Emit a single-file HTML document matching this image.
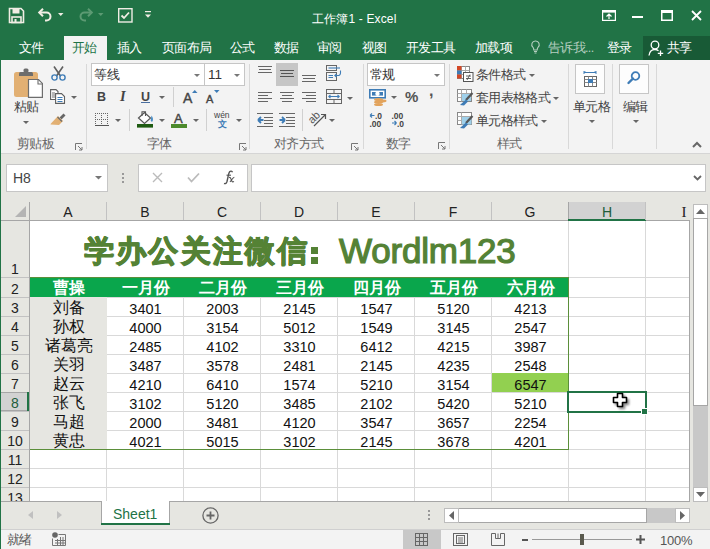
<!DOCTYPE html><html><head><meta charset="utf-8"><style>
*{margin:0;padding:0;box-sizing:border-box}
html,body{width:710px;height:549px;overflow:hidden;background:#f3f3f3;font-family:"Liberation Sans",sans-serif;position:relative}
.ab{position:absolute}
.t{position:absolute;white-space:nowrap;line-height:1}
svg{position:absolute;overflow:visible}
</style></head><body>

<div class="ab" style="left:0px;top:0px;width:710px;height:60px;background:#217346;"></div>
<div class="t" style="left:312px;top:12.5px;font-size:12px;color:#fff;letter-spacing:0.15px">工作簿1 - Excel</div>
<svg style="left:9px;top:8px" width="15" height="15" viewBox="0 0 15 15"><path d="M0.5 0.5H12L14.5 3V14.5H0.5Z" fill="none" stroke="#f0ede4" stroke-width="1.6"/><rect x="3.5" y="1" width="7" height="4.5" fill="#f0ede4"/><rect x="3" y="9" width="9" height="5.5" fill="none" stroke="#f0ede4" stroke-width="1.6"/><rect x="5.5" y="11" width="2" height="3" fill="#f0ede4"/></svg>
<svg style="left:38px;top:8px" width="15" height="13" viewBox="0 0 15 13"><path d="M1.5 4.5H8.5A4 4 0 0 1 8.5 12.5H7" fill="none" stroke="#f0ede4" stroke-width="2"/><path d="M5 0.8L1.2 4.5L5 8.2" fill="none" stroke="#f0ede4" stroke-width="2"/></svg>
<svg style="left:58px;top:13px" width="6" height="4" viewBox="0 0 6 4"><path d="M0 0H5.5L2.75 3Z" fill="#f0ede4"/></svg>
<svg style="left:78px;top:8px" width="15" height="13" viewBox="0 0 15 13"><path d="M13.5 4.5H6.5A4 4 0 0 0 6.5 12.5H8" fill="none" stroke="#5c9a73" stroke-width="2"/><path d="M10 0.8L13.8 4.5L10 8.2" fill="none" stroke="#5c9a73" stroke-width="2"/></svg>
<svg style="left:98px;top:13px" width="6" height="4" viewBox="0 0 6 4"><path d="M0 0H5.5L2.75 3Z" fill="#5c9a73"/></svg>
<svg style="left:118px;top:8px" width="15" height="15" viewBox="0 0 15 15"><rect x="0.7" y="0.7" width="13.3" height="13.3" fill="none" stroke="#f0ede4" stroke-width="1.4"/><path d="M3.5 7.5L6 10L11 4.5" fill="none" stroke="#f0ede4" stroke-width="1.8"/></svg>
<svg style="left:145px;top:11px" width="7" height="8" viewBox="0 0 7 8"><rect x="0" y="0" width="6" height="1.2" fill="#f0ede4"/><path d="M0 3.5H6L3 6.8Z" fill="#f0ede4"/></svg>
<svg style="left:602px;top:10px" width="14" height="11" viewBox="0 0 14 11"><rect x="0.6" y="0.6" width="12.8" height="9.8" fill="none" stroke="#fff" stroke-width="1.2"/><rect x="0.6" y="0.6" width="12.8" height="2" fill="#fff"/><path d="M7 4V9M4.5 6.5L7 4L9.5 6.5" fill="none" stroke="#fff" stroke-width="1.2"/></svg>
<div class="ab" style="left:632px;top:16px;width:11px;height:2px;background:#fff;"></div>
<svg style="left:661px;top:10px" width="12" height="11" viewBox="0 0 12 11"><rect x="0.75" y="0.75" width="10.5" height="9.5" fill="none" stroke="#fff" stroke-width="1.5"/><rect x="0" y="0" width="12" height="3" fill="#fff"/></svg>
<svg style="left:691px;top:10px" width="11" height="11" viewBox="0 0 11 11"><path d="M1 1L10 10M10 1L1 10" stroke="#fff" stroke-width="1.8"/></svg>
<div class="ab" style="left:64px;top:36px;width:43px;height:24px;background:#f3f3f3;"></div>
<div class="t" style="left:19px;top:41.5px;font-size:12.5px;color:#fff;letter-spacing:-0.65px;">文件</div>
<div class="t" style="left:72px;top:41.5px;font-size:12.5px;color:#217346;letter-spacing:-0.65px;">开始</div>
<div class="t" style="left:117px;top:41.5px;font-size:12.5px;color:#fff;letter-spacing:-0.65px;">插入</div>
<div class="t" style="left:162px;top:41.5px;font-size:12.5px;color:#fff;letter-spacing:-0.65px;">页面布局</div>
<div class="t" style="left:230px;top:41.5px;font-size:12.5px;color:#fff;letter-spacing:-0.65px;">公式</div>
<div class="t" style="left:274px;top:41.5px;font-size:12.5px;color:#fff;letter-spacing:-0.65px;">数据</div>
<div class="t" style="left:317px;top:41.5px;font-size:12.5px;color:#fff;letter-spacing:-0.65px;">审阅</div>
<div class="t" style="left:362px;top:41.5px;font-size:12.5px;color:#fff;letter-spacing:-0.65px;">视图</div>
<div class="t" style="left:406px;top:41.5px;font-size:12.5px;color:#fff;letter-spacing:-0.65px;">开发工具</div>
<div class="t" style="left:475px;top:41.5px;font-size:12.5px;color:#fff;letter-spacing:-0.65px;">加载项</div>
<svg style="left:531px;top:40px" width="9" height="15" viewBox="0 0 9 15"><path d="M4.5 1A3.6 3.6 0 0 0 2 7.3C2.6 8 2.8 8.8 2.8 10H6.2C6.2 8.8 6.4 8 7 7.3A3.6 3.6 0 0 0 4.5 1Z" fill="none" stroke="#b5cfc0" stroke-width="1.1"/><path d="M3 11.5H6M3.5 13H5.5" stroke="#b5cfc0" stroke-width="1.1"/></svg>
<div class="t" style="left:548px;top:41.5px;font-size:12.5px;color:#b5cfc0;letter-spacing:-0.65px;">告诉我...</div>
<div class="t" style="left:607px;top:41.5px;font-size:12.5px;color:#fff;letter-spacing:-0.65px;">登录</div>
<div class="ab" style="left:643px;top:36px;width:67px;height:24px;background:#185a36;"></div>
<svg style="left:648px;top:40px" width="17" height="17" viewBox="0 0 17 17"><circle cx="7" cy="5" r="3.8" fill="none" stroke="#fff" stroke-width="1.3"/><path d="M1 15.5C1.5 11.5 4 9.5 7 9.5C8.5 9.5 9.5 10 10.5 10.7" fill="none" stroke="#fff" stroke-width="1.3"/><path d="M12.5 10.5V16M9.8 13.3H15.2" stroke="#fff" stroke-width="1.3"/></svg>
<div class="t" style="left:667px;top:41.5px;font-size:12.5px;color:#fff;letter-spacing:-0.65px;">共享</div>
<div class="ab" style="left:0px;top:60px;width:710px;height:93px;background:#f3f3f3;"></div>
<div class="ab" style="left:0px;top:153px;width:710px;height:1px;background:#d5d5d5;"></div>
<div class="ab" style="left:0px;top:60px;width:1px;height:489px;background:#217346;"></div>
<div class="t" style="left:17px;top:137.5px;font-size:12.5px;color:#666;letter-spacing:-0.65px;">剪贴板</div>
<div class="t" style="left:147px;top:137.5px;font-size:12.5px;color:#666;letter-spacing:-0.65px;">字体</div>
<div class="t" style="left:274px;top:137.5px;font-size:12.5px;color:#666;letter-spacing:-0.65px;">对齐方式</div>
<div class="t" style="left:386px;top:137.5px;font-size:12.5px;color:#666;letter-spacing:-0.65px;">数字</div>
<div class="t" style="left:497px;top:137.5px;font-size:12.5px;color:#666;letter-spacing:-0.65px;">样式</div>
<div class="ab" style="left:86px;top:64px;width:1px;height:85px;background:#d8d8d8;"></div>
<div class="ab" style="left:249px;top:64px;width:1px;height:85px;background:#d8d8d8;"></div>
<div class="ab" style="left:363px;top:64px;width:1px;height:85px;background:#d8d8d8;"></div>
<div class="ab" style="left:449px;top:64px;width:1px;height:85px;background:#d8d8d8;"></div>
<div class="ab" style="left:568px;top:64px;width:1px;height:85px;background:#d8d8d8;"></div>
<div class="ab" style="left:612px;top:64px;width:1px;height:85px;background:#d8d8d8;"></div>
<div class="ab" style="left:656px;top:64px;width:1px;height:85px;background:#d8d8d8;"></div>
<svg style="left:75px;top:143px" width="8" height="8" viewBox="0 0 8 8"><path d="M0.5 7V0.5H7" fill="none" stroke="#777" stroke-width="1"/><path d="M3 3L7 7M7 4V7H4" fill="none" stroke="#777" stroke-width="1"/></svg>
<svg style="left:239px;top:143px" width="8" height="8" viewBox="0 0 8 8"><path d="M0.5 7V0.5H7" fill="none" stroke="#777" stroke-width="1"/><path d="M3 3L7 7M7 4V7H4" fill="none" stroke="#777" stroke-width="1"/></svg>
<svg style="left:351px;top:143px" width="8" height="8" viewBox="0 0 8 8"><path d="M0.5 7V0.5H7" fill="none" stroke="#777" stroke-width="1"/><path d="M3 3L7 7M7 4V7H4" fill="none" stroke="#777" stroke-width="1"/></svg>
<svg style="left:438px;top:142px" width="8" height="8" viewBox="0 0 8 8"><path d="M0.5 7V0.5H7" fill="none" stroke="#777" stroke-width="1"/><path d="M3 3L7 7M7 4V7H4" fill="none" stroke="#777" stroke-width="1"/></svg>
<svg style="left:14px;top:68px" width="29" height="30" viewBox="0 0 29 30"><rect x="0" y="4" width="24" height="25" rx="2.5" fill="#e2b073"/><path d="M5 8V5.5Q5 4 6.5 4H17.5Q19 4 19 5.5V8Z" fill="#6d6d6d"/><rect x="9.5" y="0.5" width="5" height="4" rx="1.5" fill="#6d6d6d"/><path d="M14.5 11.5H24.5L28.4 15.4V29.4H14.5Z" fill="#fff" stroke="#6d6d6d" stroke-width="1.2"/><path d="M24 11.5V16H28.4" fill="none" stroke="#6d6d6d" stroke-width="1.1"/></svg>
<div class="t" style="left:14px;top:100.5px;font-size:12.5px;color:#444;letter-spacing:-0.65px;">粘贴</div>
<svg style="left:23px;top:121px" width="6" height="4" viewBox="0 0 6 4"><path d="M0 0H6L3 3Z" fill="#666"/></svg>
<svg style="left:51px;top:66px" width="15" height="15" viewBox="0 0 15 15"><path d="M3 0.5L9.5 10M12 0.5L5.5 10" stroke="#5f5f5f" stroke-width="1.6"/><circle cx="3.5" cy="11.5" r="2.6" fill="none" stroke="#3e7cb6" stroke-width="1.4"/><circle cx="11.5" cy="11.5" r="2.6" fill="none" stroke="#3e7cb6" stroke-width="1.4"/></svg>
<svg style="left:50px;top:89px" width="16" height="15" viewBox="0 0 16 15"><path d="M0.6 0.6H6L8 2.6V10.5H0.6Z" fill="#fff" stroke="#5f5f5f" stroke-width="1.1"/><path d="M5.6 4.6H11.5L14.5 7.6V14.4H5.6Z" fill="#fff" stroke="#5f5f5f" stroke-width="1.1"/><path d="M7.5 8.5H12.5M7.5 10.5H12.5M7.5 12.5H12.5" stroke="#3e7cb6" stroke-width="1"/><path d="M2 4H5M2 6H5M2 8H5" stroke="#5f5f5f" stroke-width="0.9"/></svg>
<svg style="left:71px;top:96px" width="6" height="4" viewBox="0 0 6 4"><path d="M0 0H6L3 3Z" fill="#666"/></svg>
<svg style="left:50px;top:112px" width="17" height="15" viewBox="0 0 17 15"><path d="M9.5 5.5L13.5 1.5L15.5 3.5L11.5 7.5Z" fill="#666"/><path d="M8 4L13 9L9 13L0.5 12.5L1 11.5Z" fill="#e2b073"/><path d="M7.5 5L12 9.5" stroke="#6d6d6d" stroke-width="1.3"/></svg>
<div class="ab" style="left:91px;top:63px;width:114px;height:23px;background:#fff;border:1px solid #c6c6c6"></div>
<div class="ab" style="left:204px;top:63px;width:41px;height:23px;background:#fff;border:1px solid #c6c6c6"></div>
<div class="t" style="left:94px;top:68px;font-size:13px;color:#333;">等线</div>
<div class="t" style="left:208px;top:68px;font-size:13.5px;color:#333;">11</div>
<svg style="left:194px;top:74px" width="6" height="4" viewBox="0 0 6 4"><path d="M0 0H6L3 3Z" fill="#777"/></svg>
<svg style="left:234px;top:74px" width="6" height="4" viewBox="0 0 6 4"><path d="M0 0H6L3 3Z" fill="#777"/></svg>
<div class="t" style="left:97px;top:91px;font-size:12.5px;color:#444;font-weight:bold">B</div>
<div class="t" style="left:120px;top:89px;font-size:14.5px;color:#444;font-style:italic;font-family:Liberation Serif,serif;font-weight:bold">I</div>
<div class="t" style="left:141px;top:91px;font-size:12.5px;color:#444;font-weight:bold">U</div>
<div class="ab" style="left:141px;top:102px;width:9px;height:1px;background:#4a6fa0;"></div>
<svg style="left:159px;top:96px" width="6" height="4" viewBox="0 0 6 4"><path d="M0 0H6L3 3Z" fill="#666"/></svg>
<div class="ab" style="left:173px;top:87px;width:1px;height:20px;background:#d0d0d0;"></div>
<div class="t" style="left:183px;top:91px;font-size:14px;color:#444;-webkit-text-stroke:0.4px #444">A</div>
<svg style="left:192px;top:90px" width="6" height="3" viewBox="0 0 6 3"><path d="M0 3H5.5L2.75 0Z" fill="#3e7cb6"/></svg>
<div class="t" style="left:206px;top:94px;font-size:11px;color:#444;-webkit-text-stroke:0.4px #444">A</div>
<svg style="left:214px;top:90px" width="6" height="3" viewBox="0 0 6 3"><path d="M0 0H5.5L2.75 3Z" fill="#3e7cb6"/></svg>
<svg style="left:95px;top:113px" width="14" height="14" viewBox="0 0 14 14"><rect x="0" y="0" width="1" height="1" fill="#666"/><rect x="2" y="0" width="1" height="1" fill="#666"/><rect x="4" y="0" width="1" height="1" fill="#666"/><rect x="6" y="0" width="1" height="1" fill="#666"/><rect x="8" y="0" width="1" height="1" fill="#666"/><rect x="10" y="0" width="1" height="1" fill="#666"/><rect x="12" y="0" width="1" height="1" fill="#666"/><rect x="0" y="2" width="1" height="1" fill="#666"/><rect x="6" y="2" width="1" height="1" fill="#666"/><rect x="12" y="2" width="1" height="1" fill="#666"/><rect x="0" y="4" width="1" height="1" fill="#666"/><rect x="6" y="4" width="1" height="1" fill="#666"/><rect x="12" y="4" width="1" height="1" fill="#666"/><rect x="0" y="6" width="1" height="1" fill="#666"/><rect x="2" y="6" width="1" height="1" fill="#666"/><rect x="4" y="6" width="1" height="1" fill="#666"/><rect x="6" y="6" width="1" height="1" fill="#666"/><rect x="8" y="6" width="1" height="1" fill="#666"/><rect x="10" y="6" width="1" height="1" fill="#666"/><rect x="12" y="6" width="1" height="1" fill="#666"/><rect x="0" y="8" width="1" height="1" fill="#666"/><rect x="6" y="8" width="1" height="1" fill="#666"/><rect x="12" y="8" width="1" height="1" fill="#666"/><rect x="0" y="10" width="1" height="1" fill="#666"/><rect x="6" y="10" width="1" height="1" fill="#666"/><rect x="12" y="10" width="1" height="1" fill="#666"/><rect x="0" y="12" width="1" height="1" fill="#666"/><rect x="6" y="12" width="1" height="1" fill="#666"/><rect x="12" y="12" width="1" height="1" fill="#666"/><rect x="0" y="12" width="14" height="1" fill="#555"/></svg>
<svg style="left:115px;top:119px" width="6" height="4" viewBox="0 0 6 4"><path d="M0 0H6L3 3Z" fill="#666"/></svg>
<div class="ab" style="left:129px;top:109px;width:1px;height:22px;background:#d0d0d0;"></div>
<svg style="left:137px;top:111px" width="17" height="17" viewBox="0 0 17 17"><path d="M1.5 7L7.5 1.5L13.5 7L7.5 12.5Z" fill="#fff" stroke="#555" stroke-width="1.2"/><path d="M5 5V0.8H8.5V5" fill="none" stroke="#555" stroke-width="1.1"/><path d="M14.5 4.5C16 6.5 16.5 8.5 15.5 10.5C14.5 11 13.5 10.2 13.8 8.5Z" fill="#4a8ec6"/><rect x="0" y="13" width="16" height="3.6" fill="#1e5b12"/></svg>
<svg style="left:159px;top:119px" width="6" height="4" viewBox="0 0 6 4"><path d="M0 0H6L3 3Z" fill="#666"/></svg>
<div class="t" style="left:174px;top:112px;font-size:13px;color:#444;-webkit-text-stroke:0.4px #444">A</div>
<div class="ab" style="left:171px;top:124px;width:16px;height:3.5px;background:#4c8a2c;"></div>
<svg style="left:193px;top:119px" width="6" height="4" viewBox="0 0 6 4"><path d="M0 0H6L3 3Z" fill="#666"/></svg>
<div class="ab" style="left:206px;top:109px;width:1px;height:22px;background:#d0d0d0;"></div>
<div class="t" style="left:214px;top:111px;font-size:8.5px;color:#444;">wén</div>
<div class="t" style="left:218px;top:120px;font-size:9px;color:#3e7cb6;font-weight:bold">文</div>
<svg style="left:236px;top:119px" width="6" height="4" viewBox="0 0 6 4"><path d="M0 0H6L3 3Z" fill="#666"/></svg>
<svg style="left:258px;top:66px" width="20" height="20" viewBox="0 0 20 20"><rect x="0" y="0" width="14" height="1" fill="#666"/><rect x="1" y="3" width="12" height="1" fill="#666"/><rect x="0" y="6" width="14" height="1" fill="#666"/></svg>
<div class="ab" style="left:276px;top:63px;width:22px;height:23px;background:#c6c6c6;"></div>
<svg style="left:280px;top:70px" width="20" height="20" viewBox="0 0 20 20"><rect x="0" y="0" width="14" height="1" fill="#555"/><rect x="1" y="3" width="12" height="1" fill="#555"/><rect x="0" y="6" width="14" height="1" fill="#555"/></svg>
<svg style="left:302px;top:75px" width="20" height="20" viewBox="0 0 20 20"><rect x="0" y="0" width="14" height="1" fill="#666"/><rect x="1" y="3" width="12" height="1" fill="#666"/><rect x="0" y="6" width="14" height="1" fill="#666"/></svg>
<svg style="left:258px;top:92px" width="20" height="20" viewBox="0 0 20 20"><rect x="0" y="0" width="14" height="1" fill="#666"/><rect x="0" y="3" width="10" height="1" fill="#666"/><rect x="0" y="6" width="14" height="1" fill="#666"/><rect x="0" y="9" width="10" height="1" fill="#666"/></svg>
<svg style="left:280px;top:92px" width="20" height="20" viewBox="0 0 20 20"><rect x="0" y="0" width="14" height="1" fill="#666"/><rect x="2" y="3" width="10" height="1" fill="#666"/><rect x="0" y="6" width="14" height="1" fill="#666"/><rect x="2" y="9" width="10" height="1" fill="#666"/></svg>
<svg style="left:302px;top:92px" width="20" height="20" viewBox="0 0 20 20"><rect x="0" y="0" width="14" height="1" fill="#666"/><rect x="4" y="3" width="10" height="1" fill="#666"/><rect x="0" y="6" width="14" height="1" fill="#666"/><rect x="4" y="9" width="10" height="1" fill="#666"/></svg>
<svg style="left:326px;top:65px" width="17" height="17" viewBox="0 0 17 17"><rect x="0.5" y="0.5" width="10" height="5" fill="none" stroke="#666" stroke-width="1"/><rect x="0.5" y="7.5" width="10" height="8" fill="none" stroke="#666" stroke-width="1"/><path d="M2.5 3H14" stroke="#3e7cb6" stroke-width="1.1"/><path d="M2.5 10.5H7M2.5 12.5H7" stroke="#3e7cb6" stroke-width="1"/><path d="M14.5 5.5V8A2.5 2.5 0 0 1 12 10.5H9M10.5 8.8L8.8 10.5L10.5 12.2" fill="none" stroke="#3e7cb6" stroke-width="1.1"/></svg>
<svg style="left:326px;top:89px" width="16" height="15" viewBox="0 0 16 15"><rect x="0.5" y="0.5" width="15" height="14" fill="none" stroke="#666" stroke-width="1"/><path d="M0.5 4.5H15.5M0.5 10.5H15.5M8 0.5V4.5M8 10.5V14.5" stroke="#666" stroke-width="1"/><path d="M2.5 7.5H13.5M4.5 5.8L2.8 7.5L4.5 9.2M11.5 5.8L13.2 7.5L11.5 9.2" fill="none" stroke="#3e7cb6" stroke-width="1.1"/></svg>
<svg style="left:347px;top:97px" width="6" height="4" viewBox="0 0 6 4"><path d="M0 0H6L3 3Z" fill="#666"/></svg>
<svg style="left:257px;top:113px" width="17" height="15" viewBox="0 0 17 15"><rect x="0" y="0" width="16" height="1" fill="#666"/><rect x="7" y="4" width="9" height="1" fill="#666"/><rect x="7" y="7" width="9" height="1" fill="#666"/><rect x="7" y="10" width="9" height="1" fill="#666"/><rect x="0" y="13" width="16" height="1" fill="#666"/><path d="M1 7L4 4M1 7L4 10M1 7H6.5" fill="none" stroke="#3e7cb6" stroke-width="1.8"/></svg>
<svg style="left:279px;top:113px" width="17" height="15" viewBox="0 0 17 15"><rect x="0" y="0" width="16" height="1" fill="#666"/><rect x="7" y="4" width="9" height="1" fill="#666"/><rect x="7" y="7" width="9" height="1" fill="#666"/><rect x="7" y="10" width="9" height="1" fill="#666"/><rect x="0" y="13" width="16" height="1" fill="#666"/><path d="M6 7L3 4M6 7L3 10M6 7H0.5" fill="none" stroke="#3e7cb6" stroke-width="1.8"/></svg>
<div class="ab" style="left:302px;top:109px;width:1px;height:22px;background:#d0d0d0;"></div>
<div class="t" style="left:308px;top:112px;font-size:11px;color:#555;transform:rotate(-45deg);transform-origin:50% 50%">ab</div>
<svg style="left:313px;top:113px" width="14" height="14" viewBox="0 0 14 14"><path d="M1 13L12 2M8 1.5H12.5V6" fill="none" stroke="#555" stroke-width="1.2"/></svg>
<svg style="left:329px;top:119px" width="6" height="4" viewBox="0 0 6 4"><path d="M0 0H6L3 3Z" fill="#666"/></svg>
<div class="ab" style="left:367px;top:63px;width:78px;height:23px;background:#fff;border:1px solid #c6c6c6"></div>
<div class="t" style="left:370px;top:68.5px;font-size:12.5px;color:#333;letter-spacing:-0.65px;">常规</div>
<svg style="left:434px;top:74px" width="6" height="4" viewBox="0 0 6 4"><path d="M0 0H6L3 3Z" fill="#777"/></svg>
<svg style="left:369px;top:89px" width="18" height="17" viewBox="0 0 18 17"><rect x="0.8" y="0.8" width="15.4" height="8" fill="#fff" stroke="#3e7cb6" stroke-width="1.6"/><rect x="3" y="3" width="11" height="3.6" fill="#3e7cb6"/><circle cx="8.5" cy="4.8" r="2.2" fill="#fff"/><ellipse cx="9.5" cy="10.5" rx="4.5" ry="1.6" fill="#e2a35c"/><ellipse cx="9.5" cy="13" rx="4.5" ry="1.6" fill="#e2a35c"/><ellipse cx="9.5" cy="15.5" rx="4.5" ry="1.6" fill="#e2a35c"/><ellipse cx="14" cy="12" rx="3.5" ry="1.4" fill="#e2a35c"/></svg>
<svg style="left:391px;top:96px" width="6" height="4" viewBox="0 0 6 4"><path d="M0 0H6L3 3Z" fill="#666"/></svg>
<div class="t" style="left:405px;top:89px;font-size:15px;color:#555;font-weight:bold">%</div>
<div class="t" style="left:429px;top:83px;font-size:16px;color:#555;font-weight:bold">,</div>
<svg style="left:369px;top:112px" width="16" height="16" viewBox="0 0 16 16"><path d="M1 3.5H5.5M1 3.5L3 1.5M1 3.5L3 5.5" fill="none" stroke="#3e7cb6" stroke-width="1.1"/><text x="6" y="7" font-size="8.5" font-family="Liberation Sans" font-weight="bold" fill="#444">.0</text><text x="0.5" y="14.5" font-size="8.5" font-family="Liberation Sans" font-weight="bold" fill="#444">.00</text></svg>
<svg style="left:391px;top:112px" width="16" height="16" viewBox="0 0 16 16"><text x="0.5" y="7" font-size="8.5" font-family="Liberation Sans" font-weight="bold" fill="#444">.00</text><path d="M1 11H5.5M5.5 11L3.5 9M5.5 11L3.5 13" fill="none" stroke="#3e7cb6" stroke-width="1.1"/><text x="6" y="14.5" font-size="8.5" font-family="Liberation Sans" font-weight="bold" fill="#444">.0</text></svg>
<svg style="left:457px;top:66px" width="17" height="17" viewBox="0 0 17 17"><rect x="0.5" y="0.5" width="12" height="12" fill="#fff" stroke="#888" stroke-width="1"/><path d="M0.5 4.5H12.5M0.5 8.5H12.5M4.5 0.5V12.5M8.5 0.5V12.5" stroke="#aaa" stroke-width="1"/><rect x="0" y="0" width="4.5" height="4.5" fill="#d24726"/><rect x="0" y="4.5" width="4.5" height="4" fill="#3e7cb6"/><rect x="0" y="8.5" width="4.5" height="4" fill="#d24726"/><rect x="6.5" y="6.5" width="9.5" height="9" fill="#fff" stroke="#555" stroke-width="1"/><path d="M9 10H14M9 12.5H14M10 14L13 8.5" stroke="#555" stroke-width="0.9"/></svg>
<div class="t" style="left:476px;top:68.5px;font-size:12.5px;color:#444;letter-spacing:-0.65px;">条件格式</div>
<svg style="left:529px;top:74px" width="6" height="4" viewBox="0 0 6 4"><path d="M0 0H6L3 3Z" fill="#666"/></svg>
<svg style="left:457px;top:89px" width="17" height="17" viewBox="0 0 17 17"><rect x="0.5" y="0.5" width="14" height="12" fill="#fff" stroke="#888" stroke-width="1"/><path d="M0.5 4.5H14.5M0.5 8.5H14.5M4.5 0.5V12.5M9.5 0.5V12.5" stroke="#aaa" stroke-width="1"/><rect x="5" y="5" width="9" height="7" fill="#9fd0ea"/><path d="M15.5 4L9 11" stroke="#555" stroke-width="2.2"/><path d="M9 10.5L11 12.5L7 16.5L3 16Z" fill="#3e7cb6"/></svg>
<div class="t" style="left:476px;top:91.5px;font-size:12.5px;color:#444;letter-spacing:-0.65px;">套用表格格式</div>
<svg style="left:553px;top:97px" width="6" height="4" viewBox="0 0 6 4"><path d="M0 0H6L3 3Z" fill="#666"/></svg>
<svg style="left:457px;top:112px" width="17" height="17" viewBox="0 0 17 17"><rect x="0.5" y="0.5" width="14" height="12" fill="#fff" stroke="#888" stroke-width="1"/><path d="M0.5 4.5H14.5M0.5 8.5H14.5M4.5 0.5V12.5" stroke="#aaa" stroke-width="1"/><rect x="5" y="5" width="9.5" height="7.5" fill="#9fd0ea"/><path d="M15.5 4L9 11" stroke="#555" stroke-width="2.2"/><path d="M9 10.5L11 12.5L7 16.5L3 16Z" fill="#3e7cb6"/></svg>
<div class="t" style="left:476px;top:114.5px;font-size:12.5px;color:#444;letter-spacing:-0.65px;">单元格样式</div>
<svg style="left:541px;top:120px" width="6" height="4" viewBox="0 0 6 4"><path d="M0 0H6L3 3Z" fill="#666"/></svg>
<div class="ab" style="left:575px;top:64px;width:30px;height:30px;background:#fdfdfd;border:1px solid #c6c6c6"></div>
<svg style="left:583px;top:71px" width="15" height="17" viewBox="0 0 15 17"><path d="M1 1.5H13M1 0V3M13 0V3M3 1.5L1.5 0.5M11 1.5L12.5 0.5" stroke="#3e7cb6" stroke-width="1"/><rect x="1.5" y="5.5" width="12" height="10" fill="#fff" stroke="#666" stroke-width="1"/><path d="M1.5 8.5H13.5M1.5 11.5H13.5M5.5 5.5V15.5M9.5 5.5V15.5" stroke="#888" stroke-width="1"/><rect x="5" y="8" width="5" height="4" fill="#3e7cb6"/></svg>
<div class="t" style="left:573px;top:100.5px;font-size:12.5px;color:#444;letter-spacing:-0.65px;">单元格</div>
<svg style="left:589px;top:120px" width="6" height="4" viewBox="0 0 6 4"><path d="M0 0H6L3 3Z" fill="#666"/></svg>
<div class="ab" style="left:619px;top:64px;width:30px;height:30px;background:#fdfdfd;border:1px solid #c6c6c6"></div>
<svg style="left:627px;top:71px" width="14" height="14" viewBox="0 0 14 14"><circle cx="8.5" cy="5" r="3.8" fill="none" stroke="#3e7cb6" stroke-width="1.8"/><path d="M6 7.5L1.5 12" stroke="#3e7cb6" stroke-width="2.4" stroke-linecap="round"/></svg>
<div class="t" style="left:623px;top:100.5px;font-size:12.5px;color:#444;letter-spacing:-0.65px;">编辑</div>
<svg style="left:633px;top:120px" width="6" height="4" viewBox="0 0 6 4"><path d="M0 0H6L3 3Z" fill="#666"/></svg>
<svg style="left:692px;top:142px" width="10" height="6" viewBox="0 0 10 6"><path d="M1 5L5 1L9 5" fill="none" stroke="#666" stroke-width="2"/></svg>
<div class="ab" style="left:1px;top:154px;width:709px;height:48px;background:#e6e6e1;"></div>
<div class="ab" style="left:6px;top:164px;width:102px;height:28px;background:#fff;border:1px solid #c6c6c6"></div>
<div class="t" style="left:13px;top:171px;font-size:14px;color:#444;">H8</div>
<svg style="left:95px;top:176px" width="8" height="5" viewBox="0 0 8 5"><path d="M0 0H7L3.5 3.5Z" fill="#777"/></svg>
<div class="ab" style="left:122px;top:173px;width:2px;height:2px;background:#999;"></div>
<div class="ab" style="left:122px;top:177px;width:2px;height:2px;background:#999;"></div>
<div class="ab" style="left:122px;top:181px;width:2px;height:2px;background:#999;"></div>
<div class="ab" style="left:138px;top:164px;width:110px;height:28px;background:#fff;border:1px solid #c6c6c6"></div>
<svg style="left:152px;top:172px" width="11" height="11" viewBox="0 0 11 11"><path d="M1 1L10 10M10 1L1 10" stroke="#bbb" stroke-width="1.4"/></svg>
<svg style="left:187px;top:172px" width="13" height="11" viewBox="0 0 13 11"><path d="M1 5.5L4.5 9.5L12 1.5" fill="none" stroke="#bbb" stroke-width="1.8"/></svg>
<svg style="left:222px;top:170px" width="14" height="15" viewBox="0 0 14 15"><path d="M10.5 2.2C10 1 8.5 0.8 7.6 1.8C6.8 2.7 6.5 4.5 6 7L5 11.5C4.5 13.2 3.5 14 2 13.5" fill="none" stroke="#555" stroke-width="1.4"/><path d="M4.5 5.2H9" stroke="#555" stroke-width="1.1"/><path d="M7 7.5C8 7.2 8.5 7.5 9 9L10 11.5C10.4 12 11 12 12 11.5M12.3 7.3C11.5 7.5 10.5 8.5 9.5 10L8 11.8" fill="none" stroke="#555" stroke-width="1.1"/></svg>
<div class="ab" style="left:251px;top:164px;width:455px;height:28px;background:#fff;border:1px solid #c6c6c6"></div>
<svg style="left:693px;top:175px" width="9" height="6" viewBox="0 0 9 6"><path d="M1 1L4.5 4.5L8 1" fill="none" stroke="#666" stroke-width="1.8"/></svg>
<div class="ab" style="left:1px;top:202px;width:689px;height:19px;background:#e6e6e1;"></div>
<div class="ab" style="left:1px;top:220px;width:689px;height:1px;background:#a6a6a6;"></div>
<div class="ab" style="left:568px;top:202px;width:78px;height:18px;background:#d2d2d2;border-left:1px solid #a6a6a6"></div>
<div class="ab" style="left:568px;top:219px;width:78px;height:2px;background:#217346;"></div>
<div class="ab" style="left:30px;top:221px;width:659px;height:281px;background:#fff;"></div>
<div class="ab" style="left:1px;top:221px;width:29px;height:281px;background:#e6e6e1;"></div>
<div class="ab" style="left:29px;top:202px;width:1px;height:300px;background:#a6a6a6;"></div>
<svg style="left:15px;top:206px" width="11" height="11" viewBox="0 0 11 11"><path d="M11 0V11H0Z" fill="#b4b4b4"/></svg>
<div class="ab" style="left:30px;top:277px;width:659px;height:1px;background:#d9d9d9;"></div>
<div class="ab" style="left:1px;top:277px;width:28px;height:1px;background:#c2c2c2;"></div>
<div class="ab" style="left:30px;top:297px;width:659px;height:1px;background:#d9d9d9;"></div>
<div class="ab" style="left:1px;top:297px;width:28px;height:1px;background:#c2c2c2;"></div>
<div class="ab" style="left:30px;top:316px;width:659px;height:1px;background:#d9d9d9;"></div>
<div class="ab" style="left:1px;top:316px;width:28px;height:1px;background:#c2c2c2;"></div>
<div class="ab" style="left:30px;top:335px;width:659px;height:1px;background:#d9d9d9;"></div>
<div class="ab" style="left:1px;top:335px;width:28px;height:1px;background:#c2c2c2;"></div>
<div class="ab" style="left:30px;top:354px;width:659px;height:1px;background:#d9d9d9;"></div>
<div class="ab" style="left:1px;top:354px;width:28px;height:1px;background:#c2c2c2;"></div>
<div class="ab" style="left:30px;top:373px;width:659px;height:1px;background:#d9d9d9;"></div>
<div class="ab" style="left:1px;top:373px;width:28px;height:1px;background:#c2c2c2;"></div>
<div class="ab" style="left:30px;top:392px;width:659px;height:1px;background:#d9d9d9;"></div>
<div class="ab" style="left:1px;top:392px;width:28px;height:1px;background:#c2c2c2;"></div>
<div class="ab" style="left:30px;top:411px;width:659px;height:1px;background:#d9d9d9;"></div>
<div class="ab" style="left:1px;top:411px;width:28px;height:1px;background:#c2c2c2;"></div>
<div class="ab" style="left:30px;top:430px;width:659px;height:1px;background:#d9d9d9;"></div>
<div class="ab" style="left:1px;top:430px;width:28px;height:1px;background:#c2c2c2;"></div>
<div class="ab" style="left:30px;top:449px;width:659px;height:1px;background:#d9d9d9;"></div>
<div class="ab" style="left:1px;top:449px;width:28px;height:1px;background:#c2c2c2;"></div>
<div class="ab" style="left:30px;top:468px;width:659px;height:1px;background:#d9d9d9;"></div>
<div class="ab" style="left:1px;top:468px;width:28px;height:1px;background:#c2c2c2;"></div>
<div class="ab" style="left:30px;top:487px;width:659px;height:1px;background:#d9d9d9;"></div>
<div class="ab" style="left:1px;top:487px;width:28px;height:1px;background:#c2c2c2;"></div>
<div class="ab" style="left:106px;top:221px;width:1px;height:281px;background:#d9d9d9;"></div>
<div class="ab" style="left:106px;top:202px;width:1px;height:18px;background:#c2c2c2;"></div>
<div class="ab" style="left:183px;top:221px;width:1px;height:281px;background:#d9d9d9;"></div>
<div class="ab" style="left:183px;top:202px;width:1px;height:18px;background:#c2c2c2;"></div>
<div class="ab" style="left:260px;top:221px;width:1px;height:281px;background:#d9d9d9;"></div>
<div class="ab" style="left:260px;top:202px;width:1px;height:18px;background:#c2c2c2;"></div>
<div class="ab" style="left:337px;top:221px;width:1px;height:281px;background:#d9d9d9;"></div>
<div class="ab" style="left:337px;top:202px;width:1px;height:18px;background:#c2c2c2;"></div>
<div class="ab" style="left:414px;top:221px;width:1px;height:281px;background:#d9d9d9;"></div>
<div class="ab" style="left:414px;top:202px;width:1px;height:18px;background:#c2c2c2;"></div>
<div class="ab" style="left:491px;top:221px;width:1px;height:281px;background:#d9d9d9;"></div>
<div class="ab" style="left:491px;top:202px;width:1px;height:18px;background:#c2c2c2;"></div>
<div class="ab" style="left:568px;top:221px;width:1px;height:281px;background:#d9d9d9;"></div>
<div class="ab" style="left:645px;top:221px;width:1px;height:281px;background:#d9d9d9;"></div>
<div class="ab" style="left:645px;top:202px;width:1px;height:18px;background:#c2c2c2;"></div>
<div class="ab" style="left:689px;top:220px;width:1px;height:282px;background:#a6a6a6;"></div>
<div class="ab" style="left:1px;top:392px;width:28px;height:19px;background:#d2d2d2;border-top:1px solid #a6a6a6;border-bottom:1px solid #a6a6a6"></div>
<div class="ab" style="left:27px;top:392px;width:2px;height:19px;background:#217346;"></div>
<div class="ab" style="left:30px;top:221px;width:538px;height:56px;background:#fff;"></div>
<div class="ab" style="left:30px;top:278px;width:539px;height:19px;background:#0aa64c;"></div>
<div class="ab" style="left:30px;top:277px;width:539px;height:1px;background:#5b8f3a;"></div>
<div class="ab" style="left:30px;top:297px;width:77px;height:152px;background:#e6e6e1;"></div>
<div class="ab" style="left:492px;top:373px;width:76px;height:19px;background:#92d050;"></div>
<div class="ab" style="left:30px;top:449px;width:539px;height:1px;background:#5b8f3a;"></div>
<div class="ab" style="left:568px;top:277px;width:1px;height:173px;background:#5b8f3a;"></div>
<div class="t" style="left:30px;top:280px;font-size:16px;color:#fff;width:77px;text-align:center;font-weight:bold">曹操</div>
<div class="t" style="left:107px;top:280px;font-size:16px;color:#fff;width:77px;text-align:center;font-weight:bold">一月份</div>
<div class="t" style="left:184px;top:280px;font-size:16px;color:#fff;width:77px;text-align:center;font-weight:bold">二月份</div>
<div class="t" style="left:261px;top:280px;font-size:16px;color:#fff;width:77px;text-align:center;font-weight:bold">三月份</div>
<div class="t" style="left:338px;top:280px;font-size:16px;color:#fff;width:77px;text-align:center;font-weight:bold">四月份</div>
<div class="t" style="left:415px;top:280px;font-size:16px;color:#fff;width:77px;text-align:center;font-weight:bold">五月份</div>
<div class="t" style="left:492px;top:280px;font-size:16px;color:#fff;width:77px;text-align:center;font-weight:bold">六月份</div>
<div class="t" style="left:30px;top:299.5px;font-size:15.5px;color:#111;width:77px;text-align:center">刘备</div>
<div class="t" style="left:107px;top:302px;font-size:14.5px;color:#111;width:77px;text-align:center">3401</div>
<div class="t" style="left:184px;top:302px;font-size:14.5px;color:#111;width:77px;text-align:center">2003</div>
<div class="t" style="left:261px;top:302px;font-size:14.5px;color:#111;width:77px;text-align:center">2145</div>
<div class="t" style="left:338px;top:302px;font-size:14.5px;color:#111;width:77px;text-align:center">1547</div>
<div class="t" style="left:415px;top:302px;font-size:14.5px;color:#111;width:77px;text-align:center">5120</div>
<div class="t" style="left:492px;top:302px;font-size:14.5px;color:#111;width:77px;text-align:center">4213</div>
<div class="t" style="left:30px;top:318.5px;font-size:15.5px;color:#111;width:77px;text-align:center">孙权</div>
<div class="t" style="left:107px;top:321px;font-size:14.5px;color:#111;width:77px;text-align:center">4000</div>
<div class="t" style="left:184px;top:321px;font-size:14.5px;color:#111;width:77px;text-align:center">3154</div>
<div class="t" style="left:261px;top:321px;font-size:14.5px;color:#111;width:77px;text-align:center">5012</div>
<div class="t" style="left:338px;top:321px;font-size:14.5px;color:#111;width:77px;text-align:center">1549</div>
<div class="t" style="left:415px;top:321px;font-size:14.5px;color:#111;width:77px;text-align:center">3145</div>
<div class="t" style="left:492px;top:321px;font-size:14.5px;color:#111;width:77px;text-align:center">2547</div>
<div class="t" style="left:30px;top:337.5px;font-size:15.5px;color:#111;width:77px;text-align:center">诸葛亮</div>
<div class="t" style="left:107px;top:340px;font-size:14.5px;color:#111;width:77px;text-align:center">2485</div>
<div class="t" style="left:184px;top:340px;font-size:14.5px;color:#111;width:77px;text-align:center">4102</div>
<div class="t" style="left:261px;top:340px;font-size:14.5px;color:#111;width:77px;text-align:center">3310</div>
<div class="t" style="left:338px;top:340px;font-size:14.5px;color:#111;width:77px;text-align:center">6412</div>
<div class="t" style="left:415px;top:340px;font-size:14.5px;color:#111;width:77px;text-align:center">4215</div>
<div class="t" style="left:492px;top:340px;font-size:14.5px;color:#111;width:77px;text-align:center">3987</div>
<div class="t" style="left:30px;top:356.5px;font-size:15.5px;color:#111;width:77px;text-align:center">关羽</div>
<div class="t" style="left:107px;top:359px;font-size:14.5px;color:#111;width:77px;text-align:center">3487</div>
<div class="t" style="left:184px;top:359px;font-size:14.5px;color:#111;width:77px;text-align:center">3578</div>
<div class="t" style="left:261px;top:359px;font-size:14.5px;color:#111;width:77px;text-align:center">2481</div>
<div class="t" style="left:338px;top:359px;font-size:14.5px;color:#111;width:77px;text-align:center">2145</div>
<div class="t" style="left:415px;top:359px;font-size:14.5px;color:#111;width:77px;text-align:center">4235</div>
<div class="t" style="left:492px;top:359px;font-size:14.5px;color:#111;width:77px;text-align:center">2548</div>
<div class="t" style="left:30px;top:375.5px;font-size:15.5px;color:#111;width:77px;text-align:center">赵云</div>
<div class="t" style="left:107px;top:378px;font-size:14.5px;color:#111;width:77px;text-align:center">4210</div>
<div class="t" style="left:184px;top:378px;font-size:14.5px;color:#111;width:77px;text-align:center">6410</div>
<div class="t" style="left:261px;top:378px;font-size:14.5px;color:#111;width:77px;text-align:center">1574</div>
<div class="t" style="left:338px;top:378px;font-size:14.5px;color:#111;width:77px;text-align:center">5210</div>
<div class="t" style="left:415px;top:378px;font-size:14.5px;color:#111;width:77px;text-align:center">3154</div>
<div class="t" style="left:492px;top:378px;font-size:14.5px;color:#111;width:77px;text-align:center">6547</div>
<div class="t" style="left:30px;top:394.5px;font-size:15.5px;color:#111;width:77px;text-align:center">张飞</div>
<div class="t" style="left:107px;top:397px;font-size:14.5px;color:#111;width:77px;text-align:center">3102</div>
<div class="t" style="left:184px;top:397px;font-size:14.5px;color:#111;width:77px;text-align:center">5120</div>
<div class="t" style="left:261px;top:397px;font-size:14.5px;color:#111;width:77px;text-align:center">3485</div>
<div class="t" style="left:338px;top:397px;font-size:14.5px;color:#111;width:77px;text-align:center">2102</div>
<div class="t" style="left:415px;top:397px;font-size:14.5px;color:#111;width:77px;text-align:center">5420</div>
<div class="t" style="left:492px;top:397px;font-size:14.5px;color:#111;width:77px;text-align:center">5210</div>
<div class="t" style="left:30px;top:413.5px;font-size:15.5px;color:#111;width:77px;text-align:center">马超</div>
<div class="t" style="left:107px;top:416px;font-size:14.5px;color:#111;width:77px;text-align:center">2000</div>
<div class="t" style="left:184px;top:416px;font-size:14.5px;color:#111;width:77px;text-align:center">3481</div>
<div class="t" style="left:261px;top:416px;font-size:14.5px;color:#111;width:77px;text-align:center">4120</div>
<div class="t" style="left:338px;top:416px;font-size:14.5px;color:#111;width:77px;text-align:center">3547</div>
<div class="t" style="left:415px;top:416px;font-size:14.5px;color:#111;width:77px;text-align:center">3657</div>
<div class="t" style="left:492px;top:416px;font-size:14.5px;color:#111;width:77px;text-align:center">2254</div>
<div class="t" style="left:30px;top:432.5px;font-size:15.5px;color:#111;width:77px;text-align:center">黄忠</div>
<div class="t" style="left:107px;top:435px;font-size:14.5px;color:#111;width:77px;text-align:center">4021</div>
<div class="t" style="left:184px;top:435px;font-size:14.5px;color:#111;width:77px;text-align:center">5015</div>
<div class="t" style="left:261px;top:435px;font-size:14.5px;color:#111;width:77px;text-align:center">3102</div>
<div class="t" style="left:338px;top:435px;font-size:14.5px;color:#111;width:77px;text-align:center">2145</div>
<div class="t" style="left:415px;top:435px;font-size:14.5px;color:#111;width:77px;text-align:center">3678</div>
<div class="t" style="left:492px;top:435px;font-size:14.5px;color:#111;width:77px;text-align:center">4201</div>
<div class="t" style="left:84px;top:236px;font-size:30px;color:#548235;font-weight:900;letter-spacing:2.2px;text-shadow:0.5px 0 #548235,-0.5px 0 #548235,0 0.5px #548235,0 -0.5px #548235">学办公关注微信</div>
<div class="ab" style="left:311px;top:247px;width:7px;height:7px;background:#548235;"></div>
<div class="ab" style="left:311px;top:257px;width:7px;height:7px;background:#548235;"></div>
<div class="t" style="left:339px;top:233px;font-size:35px;color:#548235;letter-spacing:-0.2px;-webkit-text-stroke:1.2px #548235">Wordlm123</div>
<div class="ab" style="left:567px;top:391px;width:80px;height:22px;background:transparent;border:2px solid #217346"></div>
<div class="ab" style="left:641px;top:408px;width:7px;height:7px;background:#217346;border:1px solid #fff"></div>
<svg style="left:612px;top:392px" width="19" height="19" viewBox="0 0 19 19"><defs><filter id="bl" x="-30%" y="-30%" width="160%" height="160%"><feGaussianBlur stdDeviation="0.9"/></filter></defs><path d="M5.5 1.5H10.5V5.5H14.5V10.5H10.5V14.5H5.5V10.5H1.5V5.5H5.5Z" fill="#000" opacity="0.45" filter="url(#bl)" transform="translate(2,2)" stroke="#000" stroke-width="1.5" stroke-linejoin="round"/><path d="M5.5 1.5H10.5V5.5H14.5V10.5H10.5V14.5H5.5V10.5H1.5V5.5H5.5Z" fill="#fff" stroke="#000" stroke-width="1.6" stroke-linejoin="round"/></svg>
<div class="t" style="left:48px;top:205px;font-size:14px;color:#222;width:40px;text-align:center">A</div>
<div class="t" style="left:125px;top:205px;font-size:14px;color:#222;width:40px;text-align:center">B</div>
<div class="t" style="left:202px;top:205px;font-size:14px;color:#222;width:40px;text-align:center">C</div>
<div class="t" style="left:279px;top:205px;font-size:14px;color:#222;width:40px;text-align:center">D</div>
<div class="t" style="left:356px;top:205px;font-size:14px;color:#222;width:40px;text-align:center">E</div>
<div class="t" style="left:433px;top:205px;font-size:14px;color:#222;width:40px;text-align:center">F</div>
<div class="t" style="left:510px;top:205px;font-size:14px;color:#222;width:40px;text-align:center">G</div>
<div class="t" style="left:587px;top:205px;font-size:14px;color:#215c3a;width:40px;text-align:center">H</div>
<div class="t" style="left:664px;top:205px;font-size:14px;color:#222;width:40px;text-align:center;font-family:Liberation Serif,serif;font-size:15px">I</div>
<div class="t" style="left:1px;top:262px;font-size:14px;color:#222;width:28px;text-align:center">1</div>
<div class="t" style="left:1px;top:282px;font-size:14px;color:#222;width:28px;text-align:center">2</div>
<div class="t" style="left:1px;top:301px;font-size:14px;color:#222;width:28px;text-align:center">3</div>
<div class="t" style="left:1px;top:320px;font-size:14px;color:#222;width:28px;text-align:center">4</div>
<div class="t" style="left:1px;top:339px;font-size:14px;color:#222;width:28px;text-align:center">5</div>
<div class="t" style="left:1px;top:358px;font-size:14px;color:#222;width:28px;text-align:center">6</div>
<div class="t" style="left:1px;top:377px;font-size:14px;color:#222;width:28px;text-align:center">7</div>
<div class="t" style="left:1px;top:396px;font-size:14px;color:#215c3a;width:28px;text-align:center">8</div>
<div class="t" style="left:1px;top:415px;font-size:14px;color:#222;width:28px;text-align:center">9</div>
<div class="t" style="left:1px;top:434px;font-size:14px;color:#222;width:28px;text-align:center">10</div>
<div class="t" style="left:1px;top:453px;font-size:14px;color:#222;width:28px;text-align:center">11</div>
<div class="t" style="left:1px;top:472px;font-size:14px;color:#222;width:28px;text-align:center">12</div>
<div class="t" style="left:1px;top:491px;font-size:14px;color:#222;width:28px;text-align:center">13</div>
<div class="ab" style="left:690px;top:202px;width:20px;height:300px;background:#e6e6e1;"></div>
<div class="ab" style="left:693px;top:204px;width:15px;height:284px;background:#c8c8c8;"></div>
<div class="ab" style="left:693px;top:204px;width:15px;height:15px;background:#fff;border:1px solid #bdbdbd"></div>
<svg style="left:696px;top:209px" width="9" height="5" viewBox="0 0 9 5"><path d="M0 5H9L4.5 0Z" fill="#666"/></svg>
<div class="ab" style="left:693px;top:218px;width:15px;height:188px;background:#fff;border:1px solid #a6a6a6"></div>
<div class="ab" style="left:693px;top:487px;width:15px;height:15px;background:#fff;border:1px solid #bdbdbd"></div>
<svg style="left:696px;top:492px" width="9" height="5" viewBox="0 0 9 5"><path d="M0 0H9L4.5 5Z" fill="#666"/></svg>
<div class="ab" style="left:1px;top:502px;width:709px;height:27px;background:#e6e6e1;"></div>
<div class="ab" style="left:1px;top:501px;width:689px;height:1px;background:#a6a6a6;"></div>
<div class="ab" style="left:1px;top:529px;width:709px;height:1px;background:#d0d0d0;"></div>
<svg style="left:28px;top:511px" width="5" height="8" viewBox="0 0 5 8"><path d="M5 0V8L0 4Z" fill="#c0c0c0"/></svg>
<svg style="left:57px;top:511px" width="5" height="8" viewBox="0 0 5 8"><path d="M0 0V8L5 4Z" fill="#c0c0c0"/></svg>
<div class="ab" style="left:101px;top:501px;width:69px;height:24px;background:#fff;border-left:1px solid #a6a6a6;border-right:1px solid #a6a6a6"></div>
<div class="ab" style="left:101px;top:523px;width:69px;height:2px;background:#217346;"></div>
<div class="t" style="left:113px;top:507px;font-size:14px;color:#217346;">Sheet1</div>
<svg style="left:202px;top:507px" width="17" height="17" viewBox="0 0 17 17"><circle cx="8.5" cy="8.5" r="7.6" fill="none" stroke="#666" stroke-width="1.3"/><path d="M8.5 4.5V12.5M4.5 8.5H12.5" stroke="#666" stroke-width="1.8"/></svg>
<div class="ab" style="left:428px;top:510px;width:2px;height:2px;background:#999;"></div>
<div class="ab" style="left:428px;top:514px;width:2px;height:2px;background:#999;"></div>
<div class="ab" style="left:428px;top:518px;width:2px;height:2px;background:#999;"></div>
<div class="ab" style="left:444px;top:508px;width:246px;height:15px;background:#c8c8c8;"></div>
<div class="ab" style="left:444px;top:508px;width:203px;height:15px;background:#fff;border:1px solid #a6a6a6"></div>
<div class="ab" style="left:444px;top:508px;width:15px;height:15px;background:#fff;border:1px solid #bdbdbd"></div>
<svg style="left:449px;top:511px" width="5" height="9" viewBox="0 0 5 9"><path d="M5 0V9L0 4.5Z" fill="#666"/></svg>
<div class="ab" style="left:675px;top:508px;width:15px;height:15px;background:#fff;border:1px solid #bdbdbd"></div>
<svg style="left:680px;top:511px" width="5" height="9" viewBox="0 0 5 9"><path d="M0 0V9L5 4.5Z" fill="#666"/></svg>
<div class="ab" style="left:1px;top:530px;width:709px;height:19px;background:#f3f3f3;"></div>
<div class="t" style="left:7px;top:533.5px;font-size:12.5px;color:#555;letter-spacing:-0.65px;">就绪</div>
<svg style="left:52px;top:532px" width="14" height="14" viewBox="0 0 14 14"><circle cx="3" cy="3" r="2.8" fill="#666"/><path d="M6.5 2.5H13.5V13.5H0.5V6.5" fill="none" stroke="#777" stroke-width="1"/><path d="M3 8.5H13M3 11H13M5.5 7V13M8.5 5V13M11 5V13" stroke="#777" stroke-width="1"/></svg>
<div class="ab" style="left:403px;top:530px;width:38px;height:19px;background:#c8c8c8;"></div>
<svg style="left:415px;top:533px" width="13" height="13" viewBox="0 0 13 13"><rect x="0.5" y="0.5" width="12" height="12" fill="none" stroke="#666"/><path d="M4.5 0.5V12.5M8.5 0.5V12.5M0.5 4.5H12.5M0.5 8.5H12.5" stroke="#666"/></svg>
<svg style="left:453px;top:533px" width="15" height="13" viewBox="0 0 15 13"><rect x="0.5" y="0.5" width="14" height="12" fill="none" stroke="#666"/><rect x="3.5" y="2.5" width="8" height="8" fill="none" stroke="#666"/><path d="M5 5H10M5 7H10M5 9H10" stroke="#666" stroke-width="0.9"/></svg>
<svg style="left:491px;top:533px" width="14" height="13" viewBox="0 0 14 13"><path d="M0.5 12.5V0.5H4.5V5.5H9.5V0.5H13.5V12.5Z" fill="none" stroke="#666"/><path d="M7 0.5V5" stroke="#666"/></svg>
<div class="ab" style="left:522px;top:539px;width:6px;height:2px;background:#555;"></div>
<div class="ab" style="left:532px;top:539px;width:100px;height:1px;background:#999;"></div>
<div class="ab" style="left:580px;top:534px;width:4px;height:11px;background:#5a5a4e;"></div>
<svg style="left:636px;top:535px" width="9" height="9" viewBox="0 0 9 9"><path d="M4.5 0V9M0 4.5H9" stroke="#555" stroke-width="2"/></svg>
<div class="t" style="left:660px;top:534px;font-size:13px;color:#555;letter-spacing:-0.2px">100%</div>
</body></html>
